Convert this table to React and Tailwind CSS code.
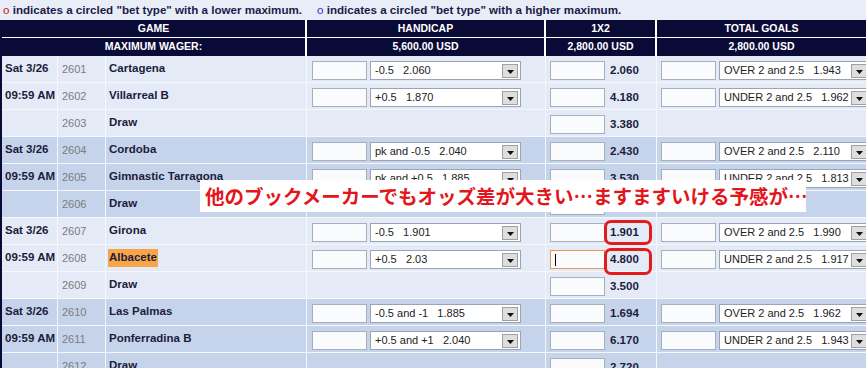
import React from 'react';

// each game: home row, away row, draw row
const GAMES = [
  {
    date: 'Sat 3/26',
    time: '09:59 AM',
    tone: 'light',
    rows: [
      { id: '2601', team: 'Cartagena', hcp: '-0.5   2.060', ml: '2.060', total: 'OVER 2 and 2.5   1.943' },
      { id: '2602', team: 'Villarreal B', hcp: '+0.5   1.870', ml: '4.180', total: 'UNDER 2 and 2.5   1.962' },
      { id: '2603', team: 'Draw', ml: '3.380' },
    ],
  },
  {
    date: 'Sat 3/26',
    time: '09:59 AM',
    tone: 'dark',
    rows: [
      { id: '2604', team: 'Cordoba', hcp: 'pk and -0.5   2.040', ml: '2.430', total: 'OVER 2 and 2.5   2.110' },
      { id: '2605', team: 'Gimnastic Tarragona', hcp: 'pk and +0.5   1.885', ml: '3.530', total: 'UNDER 2 and 2.5   1.813' },
      { id: '2606', team: 'Draw', ml: '3.160' },
    ],
  },
  {
    date: 'Sat 3/26',
    time: '09:59 AM',
    tone: 'light',
    rows: [
      { id: '2607', team: 'Girona', hcp: '-0.5   1.901', ml: '1.901', total: 'OVER 2 and 2.5   1.990', mark: 'first' },
      { id: '2608', team: 'Albacete', hcp: '+0.5   2.03', ml: '4.800', total: 'UNDER 2 and 2.5   1.917', mark: 'second', picked: true },
      { id: '2609', team: 'Draw', ml: '3.500' },
    ],
  },
  {
    date: 'Sat 3/26',
    time: '09:59 AM',
    tone: 'dark',
    rows: [
      { id: '2610', team: 'Las Palmas', hcp: '-0.5 and -1   1.885', ml: '1.694', total: 'OVER 2 and 2.5   1.962' },
      { id: '2611', team: 'Ponferradina B', hcp: '+0.5 and +1   2.040', ml: '6.170', total: 'UNDER 2 and 2.5   1.943' },
      { id: '2612', team: 'Draw', ml: '2.720' },
    ],
  },
];

function WagerBox({ focused }) {
  return (
    <div
      className={`relative h-[19px] w-[55px] shrink-0 border ${
        focused ? 'border-[#e59a55]' : 'border-[#a7afba]'
      } bg-[#fafbfc]`}
    >
      {focused && <span className="absolute left-[4px] top-[3px] h-[12px] w-px bg-black" />}
    </div>
  );
}

function LineSelect({ text }) {
  return (
    <div className="flex h-[19px] w-[151px] shrink-0 items-center border border-[#9aa4b2] bg-white pl-[4px] pr-[2px]">
      <span className="flex-1 whitespace-pre text-[11px] text-[#222]">{text}</span>
      <span className="flex h-[14px] w-[16px] items-end justify-center border border-[#a0a0a0] bg-[#dedede] pb-[3px]">
        <svg width="7" height="4" viewBox="0 0 7 4">
          <path d="M0 0h7L3.5 4z" fill="#111" />
        </svg>
      </span>
    </div>
  );
}

function GameRow({ row, label, tone }) {
  const bg = tone === 'dark' ? 'bg-[#c6d4eb]' : 'bg-[#e4ebf7]';
  return (
    <div className={`flex h-[27px] border-b border-[#f4f7fc] ${bg}`}>
      <div className="flex w-[56px] shrink-0 items-center whitespace-nowrap border-r border-[#f4f7fc] pl-[3px] text-[11.5px] font-bold text-[#1c1c3c]">
        {label}
      </div>
      <div className="flex w-[48px] shrink-0 items-center border-r border-[#f4f7fc] pl-[4px] text-[11px] text-[#7b7b7b]">
        {row.id}
      </div>
      <div className="flex w-[201px] shrink-0 items-center whitespace-nowrap border-r border-[#f4f7fc] pl-[2px] text-[11.5px] font-bold text-[#1c1c3c]">
        <span className={row.picked ? 'bg-[#f6a649] px-[1px]' : 'px-[1px]'}>{row.team}</span>
      </div>
      <div className="flex w-[239px] shrink-0 items-center gap-[3px] border-r border-[#f4f7fc] pl-[5px] pt-[3px]">
        {row.hcp && (
          <>
            <WagerBox />
            <LineSelect text={row.hcp} />
          </>
        )}
      </div>
      <div className="relative flex w-[111px] shrink-0 items-center gap-[5px] border-r border-[#f4f7fc] pl-[4px] pt-[3px]">
        <WagerBox focused={row.picked} />
        <span className="text-[11.5px] font-bold text-[#1c1c3c]">{row.ml}</span>
        {row.mark === 'first' && (
          <span className="absolute left-[58px] top-[2px] h-[25px] w-[48px] rounded-[7px] border-[3px] border-[#e21c1c]" />
        )}
        {row.mark === 'second' && (
          <span className="absolute left-[58px] top-[3px] h-[27px] w-[48px] rounded-[7px] border-[3px] border-[#e21c1c]" />
        )}
      </div>
      <div className="flex w-[240px] shrink-0 items-center gap-[3px] pl-[4px] pt-[3px]">
        {row.total && (
          <>
            <WagerBox />
            <LineSelect text={row.total} />
          </>
        )}
      </div>
    </div>
  );
}

export default function App() {
  return (
    <div className="relative h-[368px] w-[866px] overflow-hidden bg-[#e8edf8] font-['Liberation_Sans',Arial,sans-serif]">
      {/* legend */}
      <div className="flex h-[20px] items-center gap-[15px] whitespace-nowrap pl-[3px] text-[11.6px] font-bold text-[#1b1b4a]">
        <span>
          <span className="font-normal text-[#d0101a]">o</span> indicates a circled "bet type" with a lower maximum.
        </span>
        <span>
          <span className="font-normal text-[#2b35c8]">o</span> indicates a circled "bet type" with a higher maximum.
        </span>
      </div>

      <div className="w-[900px] border-l-2 border-[#0a0a36]">
        {/* column headings */}
        <div className="flex h-[18px] border-b border-white bg-[#0a0a36] text-[10.5px] font-bold text-white">
          <div className="flex w-[305px] shrink-0 items-center justify-center border-r-2 border-white">GAME</div>
          <div className="flex w-[239px] shrink-0 items-center justify-center border-r-2 border-white">HANDICAP</div>
          <div className="flex w-[111px] shrink-0 items-center justify-center border-r-2 border-white">1X2</div>
          <div className="flex w-[209px] shrink-0 items-center justify-center">TOTAL GOALS</div>
        </div>
        <div className="flex h-[18px] bg-[#0a0a36] text-[10.5px] font-bold text-white">
          <div className="flex w-[305px] shrink-0 items-center justify-center border-r-2 border-white">MAXIMUM WAGER:</div>
          <div className="flex w-[239px] shrink-0 items-center justify-center border-r-2 border-white">5,600.00 USD</div>
          <div className="flex w-[111px] shrink-0 items-center justify-center border-r-2 border-white">2,800.00 USD</div>
          <div className="flex w-[209px] shrink-0 items-center justify-center">2,800.00 USD</div>
        </div>

        {GAMES.map((game) =>
          game.rows.map((row, i) => (
            <GameRow
              key={row.id}
              row={row}
              tone={game.tone}
              label={i === 0 ? game.date : i === 1 ? game.time : ''}
            />
          ))
        )}
      </div>

      {/* caption over the board */}
      <div className="absolute left-[200px] top-[180px] flex h-[32px] w-[606px] items-center whitespace-nowrap bg-white pl-[5px] font-['Noto_Sans_CJK_JP',sans-serif] text-[19.5px] font-bold text-[#e3161b]">
        他のブックメーカーでもオッズ差が大きい…ますますいける予感が…
      </div>
    </div>
  );
}
